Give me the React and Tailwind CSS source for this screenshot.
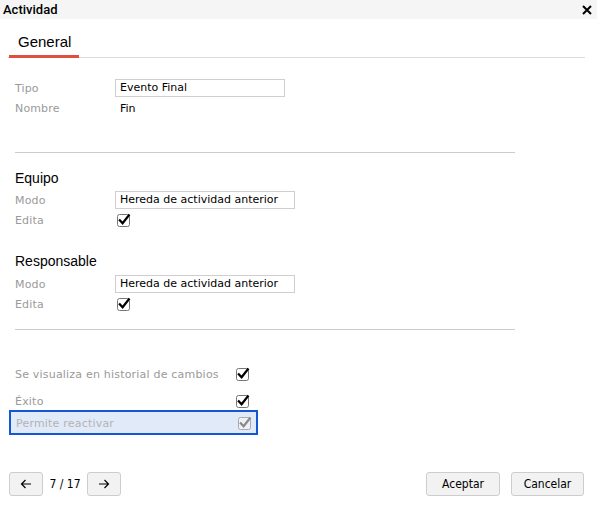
import React from "react";

const dv = { fontFamily: '"DejaVu Sans", Verdana, sans-serif' };

function Check({ disabled }) {
  return (
    <svg width="14" height="14" viewBox="0 0 14 14" className="block">
      <rect x="0.5" y="1.5" width="12" height="12" rx="2" fill={disabled ? "#eef2f8" : "#fff"} stroke={disabled ? "#aaa" : "#767676"} strokeWidth="1" />
      <path d="M2.8 7.2 L5.6 10.2 L11.8 2.4" fill="none" stroke={disabled ? "#8a8a8a" : "#000"} strokeWidth="2.2" strokeLinecap="square" strokeLinejoin="miter" />
    </svg>
  );
}

function Row({ label, children }) {
  return (
    <div className="flex items-center h-[20px]">
      <div className="w-[100px] pt-[2px] text-[11px] tracking-[0.15px] text-[#9a9a9a]" style={dv}>{label}</div>
      <div className="flex items-center">{children}</div>
    </div>
  );
}

function Input({ value, w }) {
  return (
    <div className={`${w} h-[18px] border border-[#cfcfcf] pl-[4px] flex items-center text-[11px] text-black`} style={dv}>
      {value}
    </div>
  );
}

function Btn({ children, w }) {
  return (
    <div
      className={`${w} h-[24px] border border-[#cdcdcd] rounded-[3px] bg-[#f2f2f2] flex items-center justify-center text-[12px] text-black`}
      style={{ fontFamily: '"DejaVu Sans Condensed", "DejaVu Sans", sans-serif' }}
    >
      {children}
    </div>
  );
}

const arial = { fontFamily: '"Liberation Sans", Arial, sans-serif' };

export default function App() {
  return (
    <div className="w-[597px] h-[506px] bg-white flex flex-col overflow-hidden">
      <div className="h-[19px] bg-[#f5f5f5] flex items-center justify-between pl-[3px] pr-[5px]">
        <span className="text-[13px] font-medium text-black" style={{ fontFamily: "Roboto, sans-serif" }}>Actividad</span>
        <svg width="10" height="10" viewBox="0 0 10 10">
          <path d="M1 1 L9 9 M9 1 L1 9" stroke="#000" strokeWidth="2" />
        </svg>
      </div>

      <div className="ml-[8px] mr-[12px] border-b border-[#dcdcdc] h-[39px] flex">
        <div className="ml-[1px] w-[70px] h-[39px] border-b-[3px] border-[#e0503f] pl-[9px] pt-[13px] text-[15px] leading-[20px] text-black" style={arial}>
          General
        </div>
      </div>

      <div className="pl-[15px] flex flex-col">
        <div className="mt-[20px]">
          <Row label="Tipo"><Input value="Evento Final" w="w-[170px]" /></Row>
          <Row label="Nombre"><span className="text-[11px] text-black pl-[5px] pt-[2px]" style={dv}>Fin</span></Row>
        </div>

        <div className="mt-[34px] w-[500px] h-px bg-[#cccccc]" />

        <div className="mt-[17px] h-[16px] text-[14px] leading-[16px] text-black" style={arial}>Equipo</div>
        <div className="mt-[4px]">
          <Row label="Modo"><Input value="Hereda de actividad anterior" w="w-[180px]" /></Row>
          <Row label="Edita"><div className="pl-[2px]"><Check /></div></Row>
        </div>

        <div className="mt-[23px] h-[16px] text-[14px] leading-[16px] text-black" style={arial}>Responsable</div>
        <div className="mt-[5px]">
          <Row label="Modo"><Input value="Hereda de actividad anterior" w="w-[180px]" /></Row>
          <Row label="Edita"><div className="pl-[2px]"><Check /></div></Row>
        </div>

        <div className="mt-[15px] w-[500px] h-px bg-[#cccccc]" />

        <div className="mt-[34px] h-[20px] flex items-center">
          <div className="w-[221px] pt-[2px] text-[11px] tracking-[0.2px] text-[#9a9a9a]" style={dv}>Se visualiza en historial de cambios</div>
          <Check />
        </div>
        <div className="mt-[8px] h-[18px] flex items-center">
          <div className="w-[221px] pt-[3px] text-[11px] tracking-[0.2px] text-[#9a9a9a]" style={dv}>Éxito</div>
          <Check />
        </div>
        <div className="-ml-[6px] w-[249px] h-[25px] border-2 border-[#1457d2] bg-[#e1eaf8] flex items-center pl-[5px]">
          <div className="w-[222px] pt-[3px] text-[11px] tracking-[0.2px] text-[#b4b4b4]" style={dv}>Permite reactivar</div>
          <Check disabled />
        </div>
      </div>

      <div className="mt-[37px] flex items-center pl-[9px] pr-[13px]">
        <Btn w="w-[34px]">
          <svg width="12" height="10" viewBox="0 0 12 10"><path d="M11 5 H1.5 M5.5 1 L1.5 5 L5.5 9" fill="none" stroke="#000" strokeWidth="1.2" /></svg>
        </Btn>
        <span className="w-[44px] text-center text-[12px] text-black" style={{ fontFamily: '"DejaVu Sans Condensed", "DejaVu Sans", sans-serif' }}>7 / 17</span>
        <Btn w="w-[34px]">
          <svg width="12" height="10" viewBox="0 0 12 10"><path d="M1 5 H10.5 M6.5 1 L10.5 5 L6.5 9" fill="none" stroke="#000" strokeWidth="1.2" /></svg>
        </Btn>
        <div className="flex-1" />
        <Btn w="w-[74px]">Aceptar</Btn>
        <div className="w-[11px]" />
        <Btn w="w-[73px]">Cancelar</Btn>
      </div>
    </div>
  );
}
